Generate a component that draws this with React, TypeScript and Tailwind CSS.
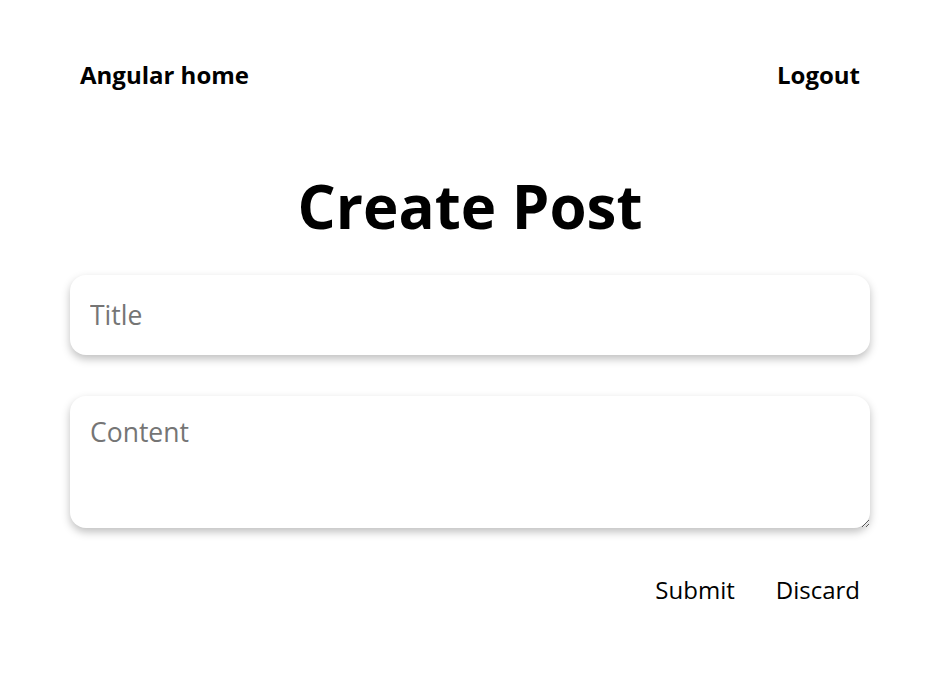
export default function App() {
  return (
    <div className="min-h-screen bg-white text-black font-['Open_Sans',sans-serif]">
      <div className="w-[800px] ml-[70px]">
        <nav className="flex justify-between items-center pt-[58px] px-[10px]">
          <a className="text-[24px] font-bold leading-[34px]">Angular home</a>
          <a className="text-[24px] font-bold leading-[34px]">Logout</a>
        </nav>
        <h1 className="text-center text-[60px] font-bold leading-[80px] mt-[74px]">
          Create Post
        </h1>
        <form className="flex flex-col mt-[29px]">
          <input
            placeholder="Title"
            className="h-[80px] rounded-2xl px-5 text-[26.5px] outline-none placeholder:text-[#757575] shadow-[0_4px_8px_rgba(0,0,0,0.25)]"
          />
          <textarea
            placeholder="Content"
            className="mt-[41px] h-[132px] rounded-2xl px-5 pt-[18px] text-[26.5px] leading-[36px] outline-none placeholder:text-[#757575] shadow-[0_4px_8px_rgba(0,0,0,0.25)]"
          />
          <div className="flex justify-end gap-[21px] mt-[44px] pr-[10px]">
            <button type="button" className="text-[24px] px-[10px]">Submit</button>
            <button type="button" className="text-[24px] px-[10px] -mr-[10px]">Discard</button>
          </div>
        </form>
      </div>
    </div>
  );
}
